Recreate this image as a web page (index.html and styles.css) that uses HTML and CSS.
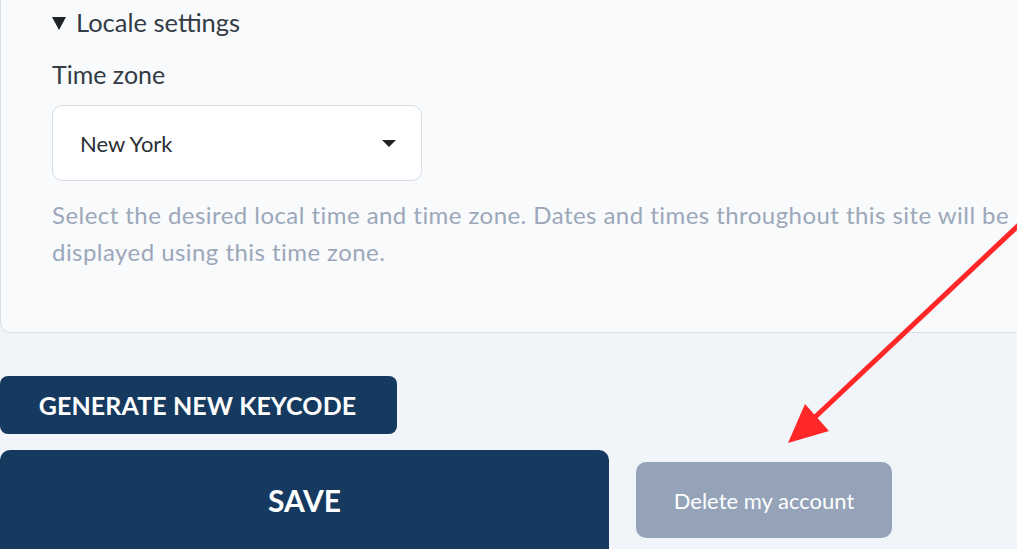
FILE: index.html
```html
<!DOCTYPE html>
<html>
<head>
<meta charset="utf-8">
<link rel="stylesheet" href="styles.css">
</head>
<body>
<div class="page">
  <section class="card">
    <details class="locale" open>
      <summary class="locale-summary">Locale settings</summary>
      <label class="field-label">Time zone</label>
      <div class="select">
        <span class="select-value">New York</span>
        <span class="select-caret"></span>
      </div>
      <p class="help">Select the desired local time and time zone. Dates and times throughout this site will be displayed using this time zone.</p>
    </details>
  </section>
  <div class="actions">
    <button class="btn btn-keycode">GENERATE NEW KEYCODE</button>
    <div class="row">
      <button class="btn btn-save">SAVE</button>
      <button class="btn btn-delete">Delete my account</button>
    </div>
  </div>
  <svg class="arrow" width="1017" height="549" viewBox="0 0 1017 549">
    <line x1="1022" y1="222" x2="812" y2="420" stroke="#ff2727" stroke-width="5" stroke-linecap="round"/>
    <polygon points="788,443 805,404 829,431" fill="#ff2727"/>
  </svg>
</div>
</body>
</html>
```

FILE: styles.css
```css
html, body {
  margin: 0;
  padding: 0;
  background: #f1f5f9;
  overflow: hidden;
  font-family: Lato, "Noto Sans", sans-serif;
}
.page {
  position: relative;
  width: 1017px;
  height: 549px;
  overflow: hidden;
}
.card {
  width: 1100px;
  box-sizing: border-box;
  background: #f8fafc;
  border: 1px solid #d8e0ea;
  border-top: none;
  border-radius: 0 0 10px 10px;
  padding: 6px 0 0 51px;
  height: 333px;
}
.locale-summary {
  font-size: 25.5px;
  color: #333b45;
  line-height: 32px;
  cursor: pointer;
  list-style: none;
}
.locale-summary::before {
  content: "";
  display: inline-block;
  width: 0;
  height: 0;
  border-left: 7px solid transparent;
  border-right: 7px solid transparent;
  border-top: 13px solid #1f2328;
  margin-right: 10px;
  vertical-align: 2px;
}
.locale-summary::-webkit-details-marker { display: none; }
.field-label {
  display: block;
  margin-top: 20px;
  font-size: 25px;
  line-height: 32px;
  color: #333b45;
}
.select {
  margin-top: 15px;
  width: 370px;
  height: 76px;
  box-sizing: border-box;
  background: #ffffff;
  border: 1px solid #d5dde7;
  border-radius: 10px;
  display: flex;
  align-items: center;
  justify-content: space-between;
  padding: 0 25px 0 27px;
}
.select-value {
  font-size: 22px;
  color: #2b2f36;
}
.select-caret {
  width: 0;
  height: 0;
  border-left: 7px solid transparent;
  border-right: 7px solid transparent;
  border-top: 7px solid #222;
}
.help {
  margin: 15px 0 0;
  width: 975px;
  font-size: 24px;
  letter-spacing: 0.45px;
  line-height: 37px;
  color: #9ca8ba;
}
.actions {
  margin-top: 43px;
  display: flex;
  flex-direction: column;
  gap: 16px;
}
.btn {
  font-family: Lato, "Noto Sans", sans-serif;
  border: none;
  cursor: pointer;
  padding: 0;
}
.btn-keycode {
  align-self: flex-start;
  width: 397px;
  height: 58px;
  background: #163a5f;
  color: #fff;
  font-weight: 700;
  font-size: 25px;
  border-radius: 8px;
  letter-spacing: 0.1px;
  padding-right: 2px;
}
.row {
  display: flex;
  align-items: flex-start;
  gap: 27px;
}
.btn-save {
  width: 609px;
  height: 110px;
  background: #163a5f;
  color: #fff;
  font-weight: 700;
  font-size: 30px;
  border-radius: 10px;
  padding-bottom: 10px;
}
.btn-delete {
  margin-top: 12px;
  width: 256px;
  height: 76px;
  background: #94a3b8;
  color: #fff;
  font-size: 22px;
  border-radius: 10px;
}
.arrow {
  position: absolute;
  left: 0;
  top: 0;
  pointer-events: none;
}
```
